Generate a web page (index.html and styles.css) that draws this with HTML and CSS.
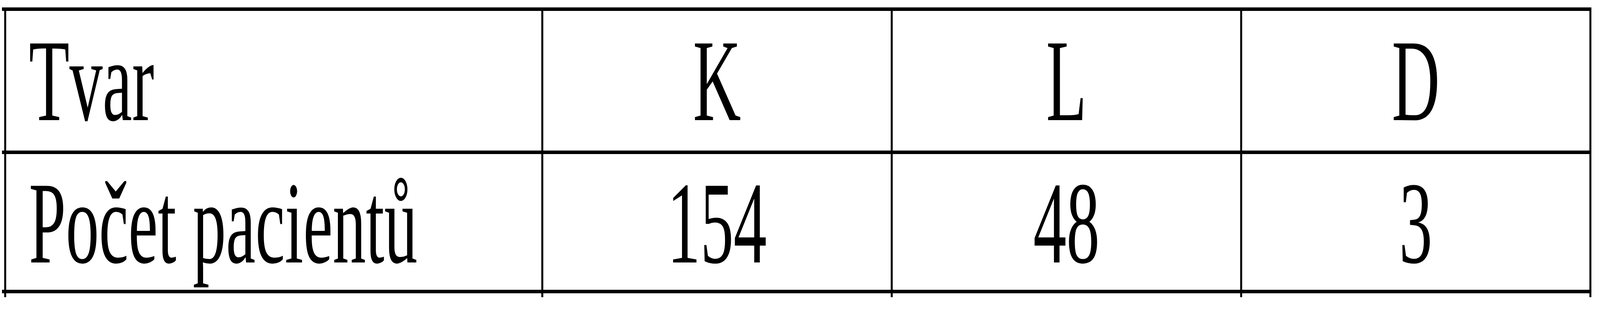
FILE: index.html
```html
<!DOCTYPE html>
<html lang="cs">
<head>
<meta charset="utf-8">
<title>Tvar – Počet pacientů</title>
<link rel="stylesheet" href="styles.css">
</head>
<body>
<div class="page">
  <div class="table">
    <div class="row row-head">
      <div class="cell cell-label">Tvar</div>
      <div class="cell cell-value">K</div>
      <div class="cell cell-value">L</div>
      <div class="cell cell-value cell-end">D</div>
    </div>
    <div class="row row-body">
      <div class="cell cell-label">Počet pacientů</div>
      <div class="cell cell-value">154</div>
      <div class="cell cell-value">48</div>
      <div class="cell cell-value cell-end">3</div>
    </div>
    <div class="tail">
      <div class="cell cell-label"></div>
      <div class="cell cell-value"></div>
      <div class="cell cell-value"></div>
      <div class="cell cell-value cell-end"></div>
    </div>
  </div>
</div>
</body>
</html>
```
FILE: styles.css
```css
html, body {
  margin: 0;
  padding: 0;
  background: #ffffff;
  overflow: hidden;
}

body {
  width: 100vw;
  height: 100vh;
  font-family: "Liberation Serif", "Times New Roman", serif;
  color: #000000;
}

/* The design is drawn on a 7239px-wide canvas; it is fitted to the
   actual viewport width so the whole table stays in frame. */
.page {
  width: 7239px;
  height: 800px;
  padding-top: 19px;
  box-sizing: border-box;
  transform-origin: 0 0;
  transform: scaleX(tan(atan2(100vw, 7239px)));
}

.table {
  margin-left: 9px;
  width: 7191px;
}

.row {
  display: flex;
  border-top: 9px solid #000000;
}

.row-head {
  height: 358px;
}

.row-body {
  height: 348px;
  border-bottom: 9px solid #000000;
}

.tail {
  display: flex;
  height: 10px;
}

.cell {
  flex: none;
  display: flex;
  align-items: center;
  border-left: 9px solid #000000;
  font-size: 300px;
  line-height: 300px;
  white-space: nowrap;
}

.cell-label {
  width: 2318px;
  margin-left: 10px;
  padding-left: 103px;
}

.cell-value {
  width: 1572px;
  justify-content: center;
}

.cell-end {
  width: 1571px;
  border-right: 9px solid #000000;
}

.row-body .cell {
  padding-top: 6px;
}
```
